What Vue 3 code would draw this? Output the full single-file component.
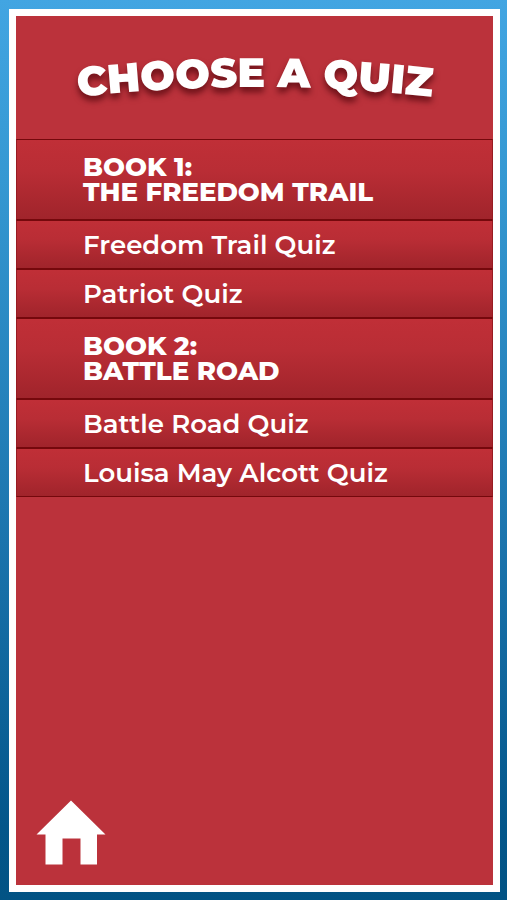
<script setup>
const books = [
  {
    label: 'Book 1:',
    title: 'The Freedom Trail',
    quizzes: ['Freedom Trail Quiz', 'Patriot Quiz'],
  },
  {
    label: 'Book 2:',
    title: 'Battle Road',
    quizzes: ['Battle Road Quiz', 'Louisa May Alcott Quiz'],
  },
]
</script>

<template>
  <div class="frame">
    <main class="panel">
      <h1 class="title">
        <svg class="arc" viewBox="0 0 477 123">
          <path id="title-arc" d="M 29 85 Q 239 57 449 85" fill="none" />
          <text class="arc-text" text-anchor="middle">
            <textPath href="#title-arc" startOffset="50%">CHOOSE A QUIZ</textPath>
          </text>
        </svg>
      </h1>

      <section v-for="book in books" :key="book.label" class="book">
        <h2 class="row heading">{{ book.label }}<br />{{ book.title }}</h2>
        <button v-for="quiz in book.quizzes" :key="quiz" class="row quiz" type="button">
          {{ quiz }}
        </button>
      </section>

      <footer class="footer">
        <a class="home" href="#" aria-label="Home">
          <svg viewBox="0 0 70 65" width="70" height="65">
            <path d="M35 0.5 L69.5 34.5 H61 V64.5 H44.5 V38.5 H26.5 V64.5 H9.5 V34.5 H0.5 Z" fill="#fff" />
          </svg>
        </a>
      </footer>
    </main>
  </div>
</template>

<style>
body {
  margin: 0;
}
</style>

<style scoped>
.frame {
  display: flex;
  box-sizing: border-box;
  min-height: 100vh;
  padding: 9px 7px 8px 9px;
  background: linear-gradient(#42a5e2, #3598d2 20%, #1b74ad 60%, #03568a 92%, #025384);
  font-family: Montserrat, Inter, "Liberation Sans", sans-serif;
  color: #fff;
}

.panel {
  display: flex;
  flex: 1;
  flex-direction: column;
  min-width: 0;
  border: 7px solid #fff;
  background: #bb323b;
}

.title {
  margin: 0;
}

.arc {
  display: block;
  width: 100%;
  overflow: visible;
  filter: drop-shadow(0 5px 3px rgba(80, 5, 12, 0.75));
}

.arc-text {
  fill: #fff;
  font-size: 41px;
  font-weight: 900;
}

.book {
  display: flex;
  flex-direction: column;
}

.row {
  box-sizing: border-box;
  margin: 0;
  padding: 0 24px 0 66px;
  border: 1px solid #75080c;
  border-right-color: #981b22;
  border-left-color: #981b22;
  background: linear-gradient(#c02f37, #b92d35 40%, #a0242b);
  color: #fff;
  font-family: inherit;
  text-align: left;
}

.heading {
  min-height: 81px;
  padding-top: 15px;
  padding-bottom: 14px;
  font-size: 26px;
  font-weight: 800;
  line-height: 25px;
  text-transform: uppercase;
}

.quiz {
  min-height: 49px;
  font-size: 26px;
  font-weight: 600;
  line-height: 32px;
  cursor: pointer;
}

.footer {
  margin-top: auto;
  padding: 20px;
}

.home {
  display: block;
  width: 70px;
}

.home svg {
  display: block;
}
</style>
